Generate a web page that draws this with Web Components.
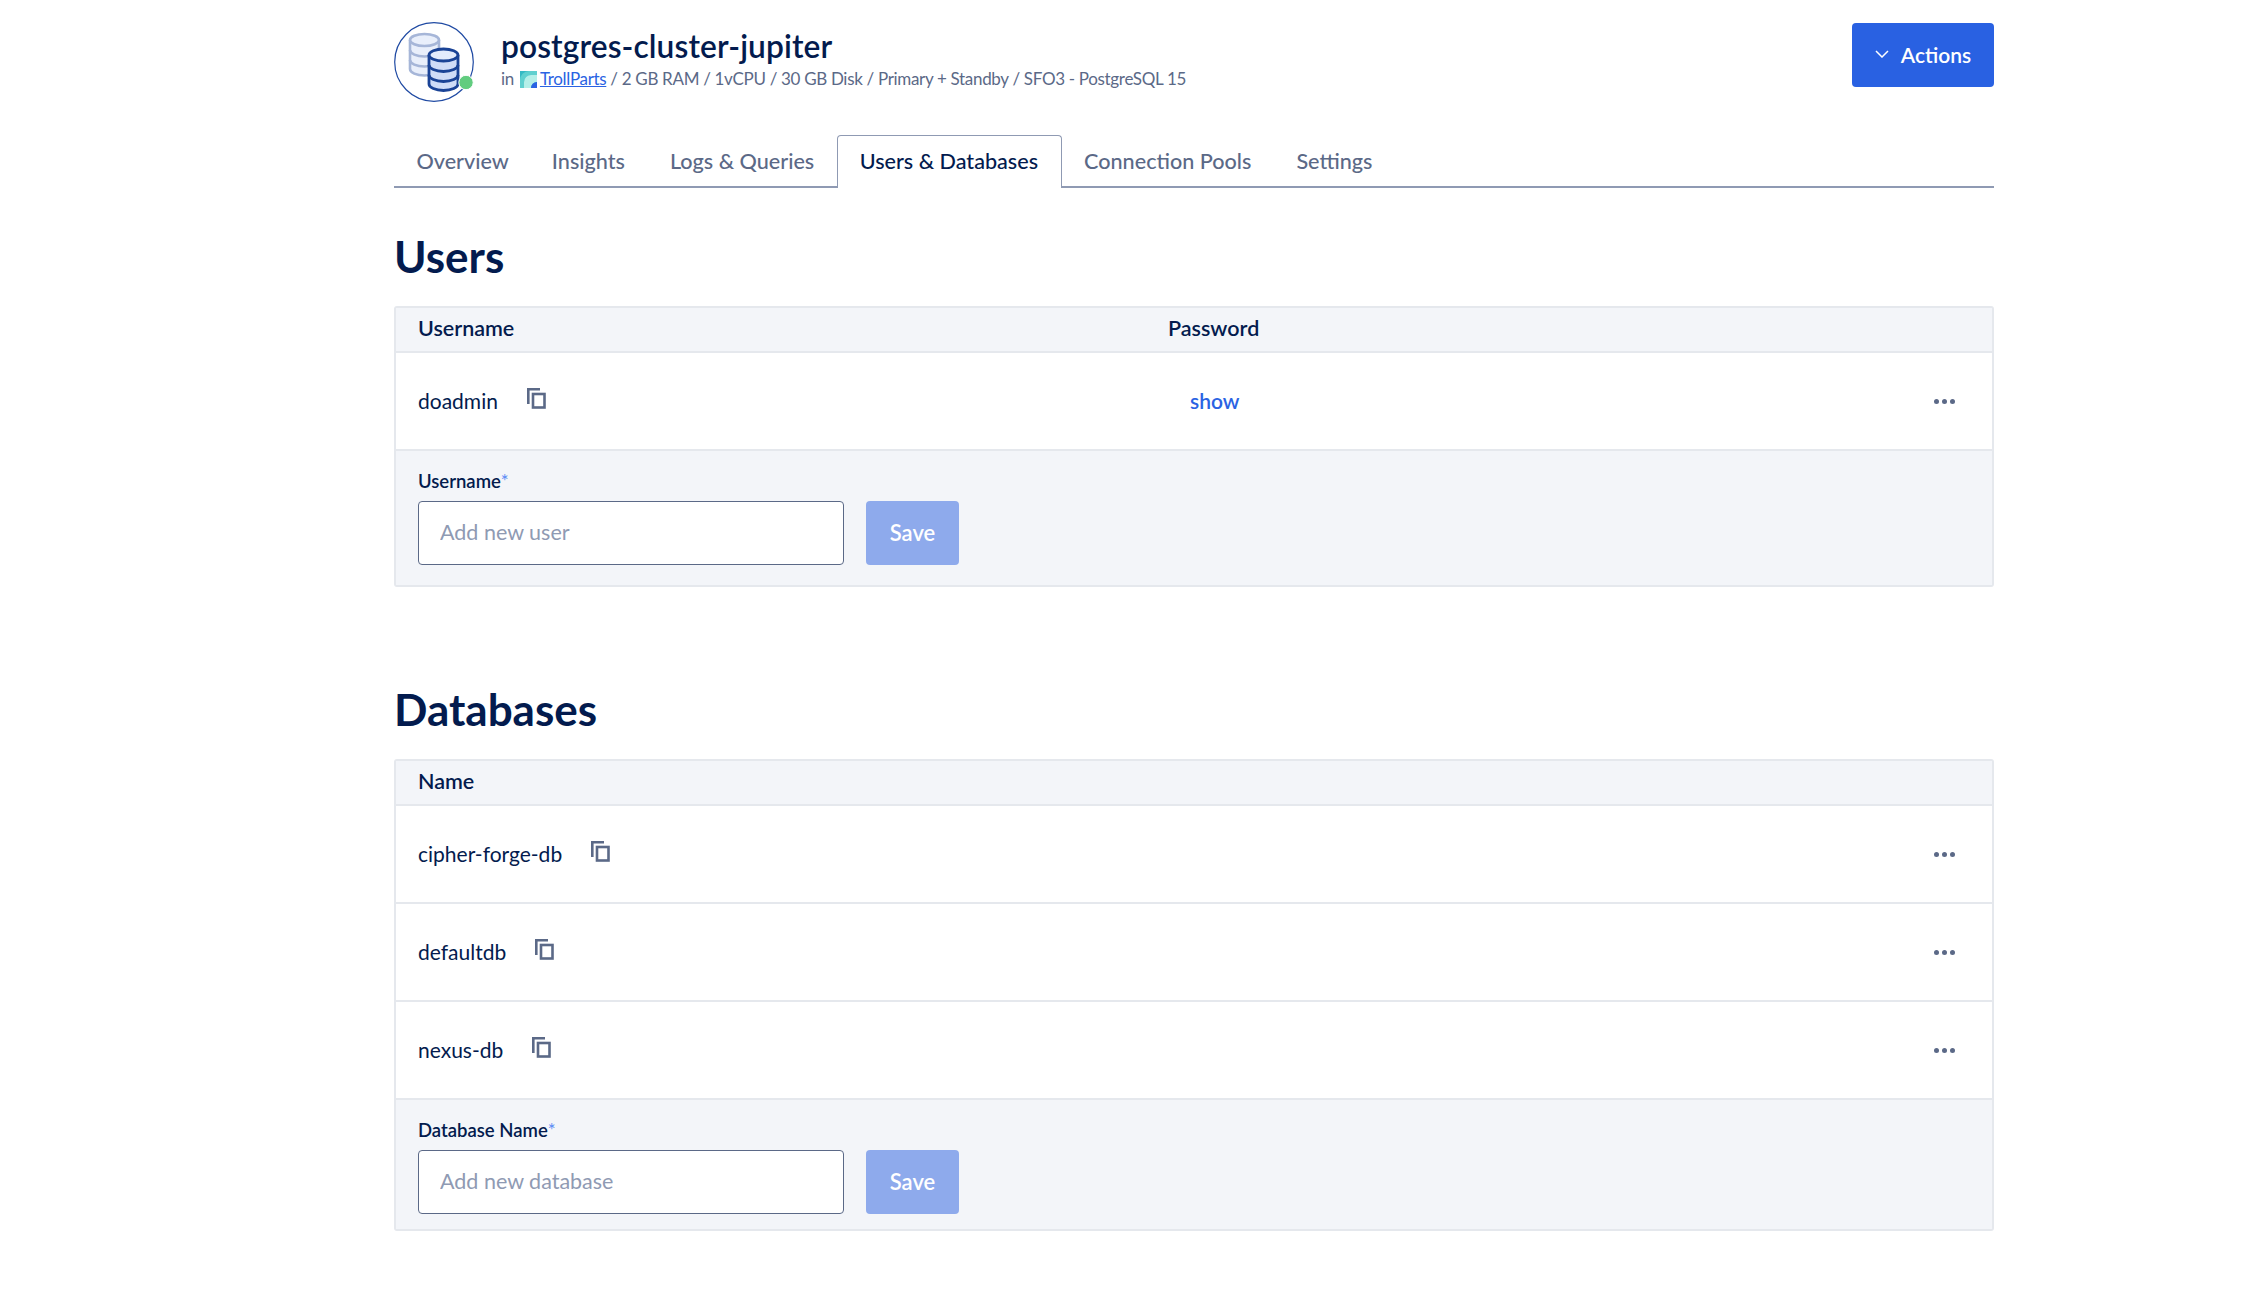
<!DOCTYPE html>
<html>
<head>
<meta charset="utf-8">
<title>postgres-cluster-jupiter</title>
<style>
    html, body { margin: 0; background: #fff; }
    body { font-family: "Lato", "Liberation Sans", sans-serif; color: #031b4e; }
</style>
</head>
<body>
<db-page>
    <cluster-header slot="header"></cluster-header>
    <db-tabs slot="tabs"></db-tabs>

    <db-section title="Users">
        <db-table columns="Username,Password" field="Username" placeholder="Add new user">
            <db-row name="doadmin" action="show"></db-row>
        </db-table>
    </db-section>

    <db-section title="Databases">
        <db-table columns="Name" field="Database Name" placeholder="Add new database" tight>
            <db-row name="cipher-forge-db"></db-row>
            <db-row name="defaultdb"></db-row>
            <db-row name="nexus-db"></db-row>
        </db-table>
    </db-section>
</db-page>

<script>
    class DbPage extends HTMLElement {
        constructor() {
            super();
            this.attachShadow({ mode: 'open' });
            this.shadowRoot.innerHTML = `
                <style>
                    :host { display: block; width: 1600px; margin-left: 394px; padding-top: 22px; }
                </style>
                <slot name="header"></slot>
                <slot name="tabs"></slot>
                <slot></slot>
            `;
        }
    }

    class ClusterHeader extends HTMLElement {
        constructor() {
            super();
            this.attachShadow({ mode: 'open' });
            this.shadowRoot.innerHTML = `
                <style>
                    :host { display: flex; align-items: flex-start; height: 80px; }
                    svg { flex: none; display: block; }
                    .text { margin-left: 27px; flex: 1; min-width: 0; }
                    h1 {
                        margin: 6px 0 0;
                        font-size: 31.7px;
                        line-height: 36px;
                        font-weight: 600;
                        color: #031b4e;
                        letter-spacing: 0.1px;
                    }
                    .meta {
                        display: flex;
                        align-items: center;
                        margin-top: 3px;
                        font-size: 17px;
                        line-height: 24px;
                        letter-spacing: -0.32px;
                        color: #5b6987;
                        white-space: pre;
                    }
                    .meta svg { margin: 0 3px 0 6px; }
                    a { color: #2a63e3; text-decoration: underline; }
                    button {
                        flex: none;
                        display: flex;
                        align-items: center;
                        justify-content: center;
                        gap: 12px;
                        width: 142px;
                        height: 64px;
                        margin-top: 1px;
                        padding: 0 0 2px;
                        border: 0;
                        border-radius: 4px;
                        background: #2961e2;
                        color: #fff;
                        font: 600 21px "Lato", "Liberation Sans", sans-serif;
                    }
                </style>
                <svg width="80" height="80" viewBox="0 0 80 80" fill="none">
                    <circle cx="40" cy="40" r="39.3" stroke="#1f4aa3" stroke-width="1.2"/>
                    <g stroke="#a6b6d8" stroke-width="2.6" fill="#e9effb">
                        <path d="M16 18v29c0 3.5 6.5 6.5 14.5 6.5S45 50.500 45 47V18"/>
                        <ellipse cx="30.500" cy="18" rx="14.500" ry="6"/>
                        <path d="M16 28c0 3.500 6.500 6.500 14.500 6.500S45 31.500 45 28M16 38c0 3.500 6.500 6.500 14.500 6.500S45 41.500 45 38" fill="none"/>
                    </g>
                    <g stroke="#1a4396" stroke-width="2.800" fill="#cfdcf7">
                        <path d="M35 33v29c0 3.500 6.500 6.500 14.500 6.500S64 65.500 64 62V33"/>
                        <ellipse cx="49.500" cy="33" rx="14.500" ry="6" fill="#e4ecfc"/>
                        <path d="M35 43c0 3.500 6.500 6.500 14.500 6.500S64 46.500 64 43M35 53c0 3.500 6.500 6.500 14.500 6.500S64 56.500 64 53" fill="none"/>
                    </g>
                    <circle cx="72" cy="60.500" r="7.200" fill="#61cc7f" stroke="#fff" stroke-width="1"/>
                </svg>
                <div class="text">
                    <h1>postgres-cluster-jupiter</h1>
                    <div class="meta">in<svg width="17" height="17" viewBox="0 0 17 17">
                            <rect width="17" height="17" fill="#35b9c4"/>
                            <path d="M0 17V9A9 9 0 0 1 9 0h8v4h-6a7 7 0 0 0-7 7v6z" fill="#5fd0cf"/>
                            <path d="M4 17v-6a7 7 0 0 1 7-7h6v7a6 6 0 0 0-6 6z" fill="#b4efe8"/>
                            <path d="M11 17a6 6 0 0 1 6-6v6z" fill="#2a63e3"/>
                        </svg><a href="#">TrollParts</a> / 2 GB RAM / 1vCPU / 30 GB Disk / Primary + Standby / SFO3 - PostgreSQL 15</div>
                </div>
                <button>
                    <svg width="14" height="8" viewBox="0 0 14 8" fill="none"><path d="M1 1l6 6 6-6" stroke="#fff" stroke-width="1.500"/></svg>
                    Actions
                </button>
            `;
        }
    }

    class DbTabs extends HTMLElement {
        constructor() {
            super();
            this.attachShadow({ mode: 'open' });
            const tabs = ['Overview', 'Insights', 'Logs & Queries', 'Users & Databases', 'Connection Pools', 'Settings'];
            this.shadowRoot.innerHTML = `
                <style>
                    :host {
                        display: flex;
                        margin-top: 33px;
                        height: 53px;
                        box-sizing: border-box;
                        border-bottom: 2px solid #8f9ab3;
                    }
                    a {
                        display: flex;
                        align-items: center;
                        height: 53px;
                        box-sizing: border-box;
                        padding: 0 21.500px 3px;
                        border: 1px solid transparent;
                        border-bottom: 0;
                        font-size: 21.600px;
                        font-weight: 500;
                        color: #5b6987;
                    }
                    a:nth-of-type(2) { margin-left: -2px; }
                    a.active {
                        padding: 0 22.500px 3px 22px;
                        color: #031b4e;
                        border-color: #8f9ab3;
                        border-radius: 4px 4px 0 0;
                        background: #fff;
                    }
                </style>
                ${tabs.map(t => `<a class="${t === 'Users & Databases' ? 'active' : ''}">${t.replace('&', '&amp;')}</a>`).join('')}
            `;
        }
    }

    class DbSection extends HTMLElement {
        constructor() {
            super();
            this.attachShadow({ mode: 'open' });
        }

        connectedCallback() {
            this.shadowRoot.innerHTML = `
                <style>
                    :host { display: block; }
                    h2 {
                        margin: 43px 0 25px;
                        font-size: 44px;
                        line-height: 50px;
                        font-weight: 700;
                        color: #031b4e;
                    }
                    :host(:last-child) h2 { margin-top: 97px; }
                </style>
                <h2>${this.getAttribute('title')}</h2>
                <slot></slot>
            `;
        }
    }

    class DbTable extends HTMLElement {
        constructor() {
            super();
            this.attachShadow({ mode: 'open' });
        }

        connectedCallback() {
            const columns = this.getAttribute('columns').split(',');
            const bottom = this.hasAttribute('tight') ? 15 : 20;
            this.shadowRoot.innerHTML = `
                <style>
                    :host {
                        display: block;
                        border: 2px solid #e5e8ed;
                        border-radius: 3px;
                        font-size: 21px;
                    }
                    .head {
                        display: grid;
                        grid-template-columns: 750px 1fr;
                        align-items: center;
                        height: 40px;
                        padding: 0 0 3px 22px;
                        background: #f3f5f9;
                        border-bottom: 2px solid #e5e8ed;
                        font-size: 21.500px;
                        font-weight: 600;
                        color: #031b4e;
                    }
                    form {
                        display: block;
                        padding: 19px 22px ${bottom}px;
                        background: #f3f5f9;
                    }
                    label { display: block; font-size: 18.500px; line-height: 22px; font-weight: 600; color: #031b4e; }
                    label span { color: #5b8cf5; font-weight: 400; }
                    .line { display: flex; gap: 22px; margin-top: 9px; }
                    input {
                        box-sizing: border-box;
                        width: 426px;
                        height: 64px;
                        padding: 0 21px 2px;
                        border: 1.500px solid #5b6987;
                        border-radius: 4px;
                        background: #fff;
                        font: 21.500px "Lato", "Liberation Sans", sans-serif;
                        color: #031b4e;
                    }
                    input::placeholder { color: #8f9ab3; opacity: 1; }
                    button {
                        width: 93px;
                        height: 64px;
                        padding: 0 0 2px;
                        border: 0;
                        border-radius: 4px;
                        background: #8eaaec;
                        color: #fff;
                        font: 600 22px "Lato", "Liberation Sans", sans-serif;
                    }
                </style>
                <div class="head">${columns.map(c => `<div>${c}</div>`).join('')}</div>
                <slot></slot>
                <form>
                    <label>${this.getAttribute('field')}<span>*</span></label>
                    <div class="line">
                        <input placeholder="${this.getAttribute('placeholder')}">
                        <button type="button">Save</button>
                    </div>
                </form>
            `;
        }
    }

    class DbRow extends HTMLElement {
        constructor() {
            super();
            this.attachShadow({ mode: 'open' });
        }

        connectedCallback() {
            const action = this.getAttribute('action');
            this.shadowRoot.innerHTML = `
                <style>
                    :host {
                        display: grid;
                        grid-template-columns: 750px 1fr auto;
                        align-items: center;
                        height: 96px;
                        padding: 0 37px 0 22px;
                        background: #fff;
                        border-bottom: 2px solid #e5e8ed;
                        color: #031b4e;
                        font-size: 21px;
                    }
                    .name { display: flex; align-items: center; gap: 29px; padding-bottom: 2px; }
                    .name svg { display: block; margin-top: -3px; }
                    .action { padding-bottom: 2px; }
                    .show { padding-left: 22px; color: #2a63e3; font-weight: 600; }
                    .dots { display: flex; gap: 3px; }
                    .dots i { width: 5px; height: 5px; border-radius: 50%; background: #5b6987; }
                </style>
                <div class="name">
                    <span>${this.getAttribute('name')}</span>
                    <svg width="19" height="21" viewBox="0 0 19 21" fill="none" stroke="#5b6987" stroke-width="2.600">
                        <path d="M1.300 16V1.300H13"/>
                        <rect x="6" y="6" width="11.500" height="13.500"/>
                    </svg>
                </div>
                <div class="action">${action ? `<span class="show">${action}</span>` : ''}</div>
                <div class="dots"><i></i><i></i><i></i></div>
            `;
        }
    }

    customElements.define('db-page', DbPage);
    customElements.define('cluster-header', ClusterHeader);
    customElements.define('db-tabs', DbTabs);
    customElements.define('db-section', DbSection);
    customElements.define('db-table', DbTable);
    customElements.define('db-row', DbRow);
</script>
</body>
</html>
